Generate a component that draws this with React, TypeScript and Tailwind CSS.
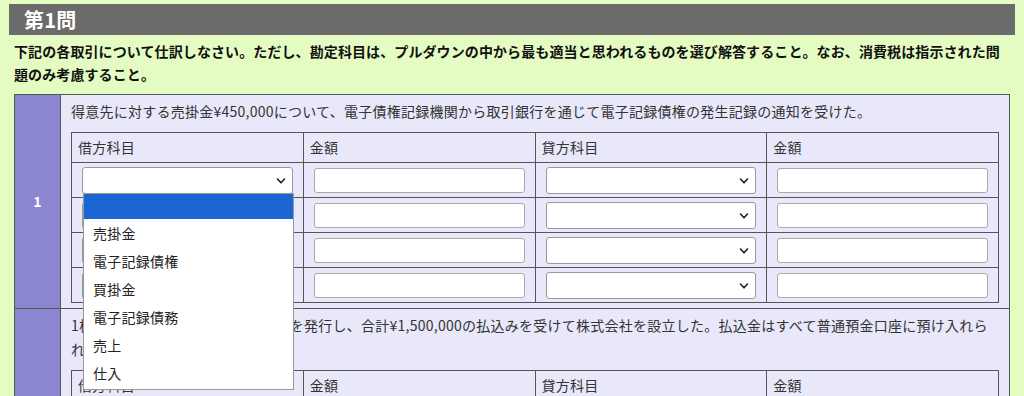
import { useState } from "react";

interface Question {
    no: number;
    text: string;
}

const questions: Question[] = [
    {
        no: 1,
        text: "得意先に対する売掛金¥450,000について、電子債権記録機関から取引銀行を通じて電子記録債権の発生記録の通知を受けた。",
    },
    {
        no: 2,
        text: "1株当たり¥50,000で普通株式30株を発行し、合計¥1,500,000の払込みを受けて株式会社を設立した。払込金はすべて普通預金口座に預け入れられた。",
    },
];

const options = ["", "売掛金", "電子記録債権", "買掛金", "電子記録債務", "売上", "仕入"];

function Chevron() {
    return (
        <svg width="10" height="6" viewBox="0 0 10 6" className="pointer-events-none absolute right-[7px] top-[11px]">
            <path d="M1.5 1 L5 4.8 L8.5 1" fill="none" stroke="#222" strokeWidth="1.6" strokeLinecap="round" strokeLinejoin="round" />
        </svg>
    );
}

function Dropdown() {
    return (
        <div className="absolute left-[1px] top-[26px] z-10 w-full bg-white border border-[#9a9a9a] pb-[2px]">
            {options.map((o, i) =>
                i === 0 ? (
                    <div key={i} className="h-[25px] bg-[#1a66d2]" />
                ) : (
                    <div key={i} className="h-[28px] leading-[28px] pl-[9px] text-[14px] text-[#222]">
                        {o}
                    </div>
                )
            )}
        </div>
    );
}

function AccountSelect({ open }: { open: boolean }) {
    return (
        <div className="relative">
            <select className="appearance-none block w-full h-[27px] bg-white border border-[#999] rounded-[3px] text-[14px] outline-none">
                {options.map((o) => (
                    <option key={o}>{o}</option>
                ))}
            </select>
            <Chevron />
            {open && <Dropdown />}
        </div>
    );
}

function AmountInput() {
    return <input type="text" className="block w-full h-[25px] bg-white border border-[#aaa] rounded-[3px] outline-none" />;
}

function EntryTable({ openFirst }: { openFirst: boolean }) {
    const heads = ["借方科目", "金額", "貸方科目", "金額"];
    return (
        <table className="w-full table-fixed border-collapse">
            <thead>
                <tr>
                    {heads.map((h, i) => (
                        <th key={i} className="border border-[#555] h-[30px] px-[6px] text-left font-normal text-[14px] text-[#333]">
                            {h}
                        </th>
                    ))}
                </tr>
            </thead>
            <tbody>
                {[0, 1, 2, 3].map((r) => (
                    <tr key={r}>
                        <td className="border border-[#555] h-[35px] px-[10px]">
                            <AccountSelect open={openFirst && r === 0} />
                        </td>
                        <td className="border border-[#555] h-[35px] px-[10px]">
                            <AmountInput />
                        </td>
                        <td className="border border-[#555] h-[35px] px-[10px]">
                            <AccountSelect open={false} />
                        </td>
                        <td className="border border-[#555] h-[35px] px-[10px]">
                            <AmountInput />
                        </td>
                    </tr>
                ))}
            </tbody>
        </table>
    );
}

export default function App() {
    const [openNo] = useState(1);

    return (
        <div className="min-h-screen bg-[#e4fcc2] pt-[4px] font-['Noto_Sans_CJK_JP',sans-serif] text-[#333] tracking-[0.25px]">
            <div className="mx-[9px] h-[31px] bg-[#6b6b6b] pl-[15px] flex items-center">
                <h1 className="text-white font-bold text-[20px] leading-none">第1問</h1>
            </div>
            <p className="mx-[14px] mt-[5px] text-[14px] leading-[23px] font-bold text-[#111] tracking-[0.1px]">
                下記の各取引について仕訳しなさい。ただし、勘定科目は、プルダウンの中から最も適当と思われるものを選び解答すること。なお、消費税は指示された問題のみ考慮すること。
            </p>
            <div className="px-[14px] mt-[8px]">
                <table className="w-full table-fixed border-collapse">
                    <tbody>
                        {questions.map((q) => (
                            <tr key={q.no}>
                                <td className="w-[46px] border border-[#555] bg-[#8b86d0] text-center align-middle text-white font-bold text-[14px]">
                                    {q.no}
                                </td>
                                <td className="border border-[#555] bg-[#e8e8fa] px-[10px] pt-[4px] pb-[5px]">
                                    <p className="text-[14px] leading-[24px] text-[#333] mb-[9px]">{q.text}</p>
                                    <EntryTable openFirst={openNo === q.no} />
                                </td>
                            </tr>
                        ))}
                    </tbody>
                </table>
            </div>
        </div>
    );
}
